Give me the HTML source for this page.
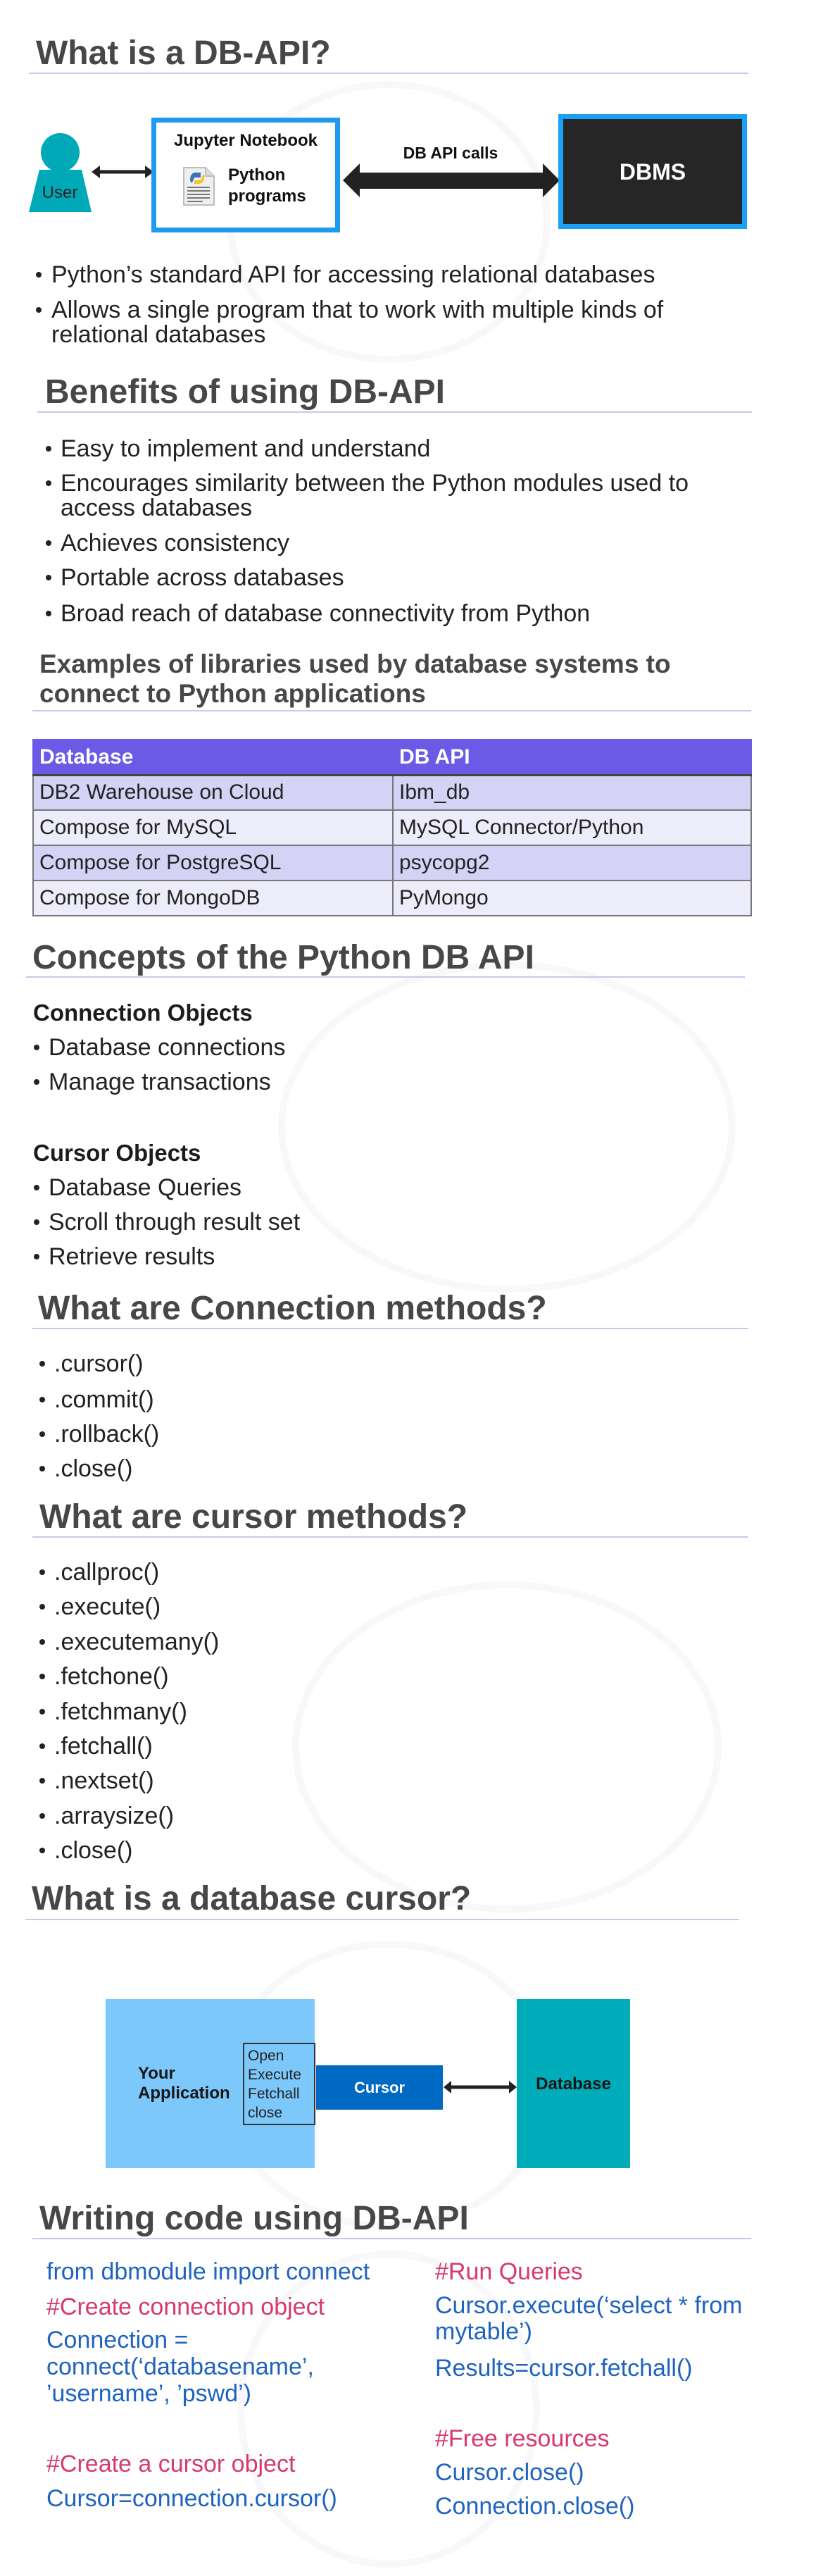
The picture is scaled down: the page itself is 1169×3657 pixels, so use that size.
<!DOCTYPE html>
<html><head><meta charset="utf-8"><style>
*{margin:0;padding:0;box-sizing:border-box}
body{width:1169px;height:3657px;background:#fff;position:relative;overflow:hidden;font-family:"Liberation Sans",sans-serif;color:#222}
.a{position:absolute;white-space:nowrap}
.t{position:absolute;white-space:nowrap;font-size:48px;font-weight:bold;color:#474747;line-height:56px}
.ul{position:absolute;height:2px;background:#cbc7ec}
.b{position:absolute;white-space:nowrap;font-size:34px;line-height:40px;color:#222}
.dot{position:absolute;width:8px;height:8px;border-radius:50%;background:#222}
.h{position:absolute;white-space:nowrap;font-size:33px;font-weight:bold;line-height:40px;color:#1c1c1c}
.c{position:absolute;white-space:nowrap;font-size:34px;line-height:40px;color:#1f63c0}
.p{color:#d63a6c}
table{position:absolute;left:46px;top:1049px;width:1022px;border-collapse:collapse;font-size:30px}
td{border:2px solid #777;height:50px;padding:0 8px;line-height:46px;color:#222}
tr.hd td{background:#6a5ae6;color:#fff;font-weight:bold;border-color:#6a5ae6;border-bottom:3px solid #444}
tr.o td{background:#d5d3f5}
tr.e td{background:#ececfa}
</style></head><body>
<svg class="a" style="left:0;top:0" width="1169" height="3657">
<g fill="none" stroke="#f8f8fa" stroke-width="10">
<ellipse cx="552" cy="315" rx="225" ry="195"/>
<ellipse cx="720" cy="1600" rx="320" ry="230"/>
<ellipse cx="720" cy="2480" rx="300" ry="230"/>
<ellipse cx="552" cy="2960" rx="230" ry="200"/>
<ellipse cx="552" cy="3420" rx="210" ry="220"/>
</g>
</svg>

<div class="t" style="left:51px;top:48px">What is a DB-API?</div>
<div class="ul" style="left:41px;top:103px;width:1022px"></div>

<div class="a" style="left:58px;top:189px;width:55px;height:55px;border-radius:50%;background:#00a9b8"></div>
<svg class="a" style="left:40px;top:238px" width="92" height="64"><polygon points="16,3 76,3 90,63 1,63" fill="#00a9b8"/></svg>
<div class="a" style="left:41px;top:260px;width:88px;text-align:center;font-size:24px;line-height:28px;color:#222">User</div>
<svg class="a" style="left:128px;top:232px" width="92" height="24"><line x1="10" y1="12" x2="82" y2="12" stroke="#222" stroke-width="5"/><polygon points="2,12 14,3 14,21" fill="#222"/><polygon points="90,12 78,3 78,21" fill="#222"/></svg>

<div class="a" style="left:215px;top:167px;width:268px;height:163px;border:7px solid #1e9bf0;background:#fff"></div>
<div class="a" style="left:215px;top:186px;width:268px;text-align:center;font-size:24px;font-weight:bold;line-height:28px;color:#111">Jupyter Notebook</div>
<div class="a" style="left:324px;top:234px;font-size:24px;font-weight:bold;line-height:30px;color:#111">Python<br>programs</div>
<svg class="a" style="left:258px;top:236px" width="50" height="58">
<path d="M3 2 H34 L46 14 V55 H3 Z" fill="#efefef" stroke="#bdbdbd" stroke-width="2"/>
<path d="M34 2 V14 H46" fill="#ddd" stroke="#bdbdbd" stroke-width="2"/>
<g stroke="#777" stroke-width="2"><line x1="8" y1="30" x2="40" y2="30"/><line x1="8" y1="35" x2="40" y2="35"/><line x1="8" y1="40" x2="40" y2="40"/><line x1="8" y1="45" x2="40" y2="45"/><line x1="8" y1="50" x2="30" y2="50"/></g>
<path d="M12 20 Q12 8 22 9 L27 9 L27 16 L18 16 Q16 22 14 24 Z" fill="#3b73b9"/>
<path d="M32 12 Q34 24 24 25 L18 25 L18 20 L27 20 Q29 16 30 12 Z" fill="#f4c430"/>
</svg>

<svg class="a" style="left:485px;top:228px" width="312" height="56"><polygon points="2,28 26,4 26,17 286,17 286,4 310,28 286,52 286,40 26,40 26,52" fill="#222"/></svg>
<div class="a" style="left:540px;top:203px;width:200px;text-align:center;font-size:23px;font-weight:bold;line-height:28px;color:#111">DB API calls</div>

<div class="a" style="left:793px;top:162px;width:268px;height:163px;border:7px solid #1aa0f4;background:#262626"></div>
<div class="a" style="left:793px;top:224px;width:268px;text-align:center;font-size:32px;font-weight:bold;line-height:40px;color:#fff">DBMS</div>

<div class="dot" style="left:51px;top:386px"></div><div class="b" style="left:73px;top:370px">Python’s standard API for accessing relational databases</div>
<div class="dot" style="left:51px;top:436px"></div><div class="b" style="left:73px;top:420px">Allows a single program that to work with multiple kinds of</div>
<div class="b" style="left:73px;top:455px">relational databases</div>

<div class="t" style="left:64px;top:529px">Benefits of using DB-API</div>
<div class="ul" style="left:53px;top:584px;width:1015px"></div>
<div class="dot" style="left:65px;top:633px"></div><div class="b" style="left:86px;top:617px">Easy to implement and understand</div>
<div class="dot" style="left:65px;top:682px"></div><div class="b" style="left:86px;top:666px">Encourages similarity between the Python modules used to</div>
<div class="b" style="left:86px;top:701px">access databases</div>
<div class="dot" style="left:65px;top:767px"></div><div class="b" style="left:86px;top:751px">Achieves consistency</div>
<div class="dot" style="left:65px;top:816px"></div><div class="b" style="left:86px;top:800px">Portable across databases</div>
<div class="dot" style="left:65px;top:867px"></div><div class="b" style="left:86px;top:851px">Broad reach of database connectivity from Python</div>

<div class="a" style="left:56px;top:922px;font-size:37px;font-weight:bold;line-height:42px;color:#474747">Examples of libraries used by database systems to<br>connect to Python applications</div>
<div class="ul" style="left:46px;top:1008px;width:1021px"></div>

<table>
<tr class="hd"><td style="width:511px">Database</td><td>DB API</td></tr>
<tr class="o"><td>DB2 Warehouse on Cloud</td><td>Ibm_db</td></tr>
<tr class="e"><td>Compose for MySQL</td><td>MySQL Connector/Python</td></tr>
<tr class="o"><td>Compose for PostgreSQL</td><td>psycopg2</td></tr>
<tr class="e"><td>Compose for MongoDB</td><td>PyMongo</td></tr>
</table>

<div class="t" style="left:46px;top:1332px">Concepts of the Python DB API</div>
<div class="ul" style="left:37px;top:1386px;width:1021px"></div>
<div class="h" style="left:47px;top:1418px">Connection Objects</div>
<div class="dot" style="left:48px;top:1483px"></div><div class="b" style="left:69px;top:1467px">Database connections</div>
<div class="dot" style="left:48px;top:1532px"></div><div class="b" style="left:69px;top:1516px">Manage transactions</div>
<div class="h" style="left:47px;top:1617px">Cursor Objects</div>
<div class="dot" style="left:48px;top:1682px"></div><div class="b" style="left:69px;top:1666px">Database Queries</div>
<div class="dot" style="left:48px;top:1731px"></div><div class="b" style="left:69px;top:1715px">Scroll through result set</div>
<div class="dot" style="left:48px;top:1780px"></div><div class="b" style="left:69px;top:1764px">Retrieve results</div>

<div class="t" style="left:54px;top:1830px">What are Connection methods?</div>
<div class="ul" style="left:46px;top:1885px;width:1016px"></div>
<div class="dot" style="left:56px;top:1932px"></div><div class="b" style="left:77px;top:1916px">.cursor()</div>
<div class="dot" style="left:56px;top:1983px"></div><div class="b" style="left:77px;top:1967px">.commit()</div>
<div class="dot" style="left:56px;top:2032px"></div><div class="b" style="left:77px;top:2016px">.rollback()</div>
<div class="dot" style="left:56px;top:2081px"></div><div class="b" style="left:77px;top:2065px">.close()</div>

<div class="t" style="left:56px;top:2126px">What are cursor methods?</div>
<div class="ul" style="left:46px;top:2181px;width:1016px"></div>
<div class="dot" style="left:56px;top:2228px"></div><div class="b" style="left:77px;top:2212px">.callproc()</div>
<div class="dot" style="left:56px;top:2277px"></div><div class="b" style="left:77px;top:2261px">.execute()</div>
<div class="dot" style="left:56px;top:2327px"></div><div class="b" style="left:77px;top:2311px">.executemany()</div>
<div class="dot" style="left:56px;top:2376px"></div><div class="b" style="left:77px;top:2360px">.fetchone()</div>
<div class="dot" style="left:56px;top:2426px"></div><div class="b" style="left:77px;top:2410px">.fetchmany()</div>
<div class="dot" style="left:56px;top:2475px"></div><div class="b" style="left:77px;top:2459px">.fetchall()</div>
<div class="dot" style="left:56px;top:2524px"></div><div class="b" style="left:77px;top:2508px">.nextset()</div>
<div class="dot" style="left:56px;top:2574px"></div><div class="b" style="left:77px;top:2558px">.arraysize()</div>
<div class="dot" style="left:56px;top:2623px"></div><div class="b" style="left:77px;top:2607px">.close()</div>

<div class="t" style="left:45px;top:2668px">What is a database cursor?</div>
<div class="ul" style="left:36px;top:2724px;width:1014px"></div>

<div class="a" style="left:150px;top:2838px;width:297px;height:240px;background:#7dc8fb"></div>
<div class="a" style="left:196px;top:2930px;font-size:24px;font-weight:bold;line-height:28px;color:#161616">Your<br>Application</div>
<div class="a" style="left:345px;top:2900px;width:103px;height:117px;border:2px solid #333;background:#7dc8fb"></div>
<div class="a" style="left:352px;top:2905px;font-size:21px;line-height:27px;color:#222">Open<br>Execute<br>Fetchall<br>close</div>
<div class="a" style="left:449px;top:2932px;width:180px;height:63px;background:#0069c4"></div>
<div class="a" style="left:449px;top:2950px;width:180px;text-align:center;font-size:22px;font-weight:bold;line-height:28px;color:#fff">Cursor</div>
<svg class="a" style="left:628px;top:2952px" width="108" height="22"><line x1="10" y1="11" x2="98" y2="11" stroke="#222" stroke-width="5"/><polygon points="2,11 13,2 13,20" fill="#222"/><polygon points="106,11 95,2 95,20" fill="#222"/></svg>
<div class="a" style="left:734px;top:2838px;width:161px;height:240px;background:#00abba"></div>
<div class="a" style="left:734px;top:2945px;width:161px;text-align:center;font-size:24px;font-weight:bold;line-height:28px;color:#161616">Database</div>

<div class="t" style="left:56px;top:3122px">Writing code using DB-API</div>
<div class="ul" style="left:46px;top:3177px;width:1021px"></div>

<div class="c" style="left:66px;top:3205px">from dbmodule import connect</div>
<div class="c p" style="left:66px;top:3255px">#Create connection object</div>
<div class="c" style="left:66px;top:3303px;line-height:38px">Connection =<br>connect(‘databasename’,<br>’username’, ’pswd’)</div>
<div class="c p" style="left:66px;top:3478px">#Create a cursor object</div>
<div class="c" style="left:66px;top:3527px">Cursor=connection.cursor()</div>

<div class="c p" style="left:618px;top:3205px">#Run Queries</div>
<div class="c" style="left:618px;top:3255px;line-height:37px">Cursor.execute(‘select * from<br>mytable’)</div>
<div class="c" style="left:618px;top:3342px">Results=cursor.fetchall()</div>
<div class="c p" style="left:618px;top:3442px">#Free resources</div>
<div class="c" style="left:618px;top:3490px">Cursor.close()</div>
<div class="c" style="left:618px;top:3538px">Connection.close()</div>
</body></html>
